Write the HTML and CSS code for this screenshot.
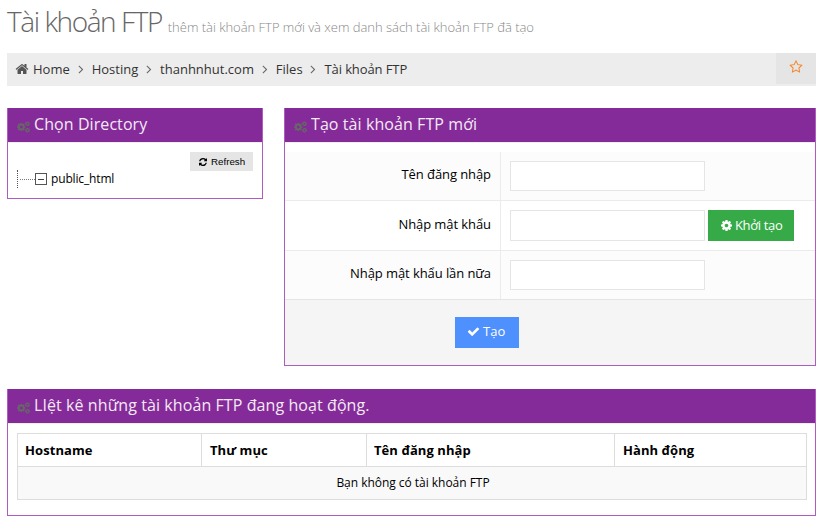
FILE: index.html
```html
<!DOCTYPE html>
<html lang="vi">
<head>
<meta charset="utf-8">
<title>Tài khoản FTP</title>
<link rel="stylesheet" href="styles.css">
</head>
<body>
<svg class="sprite" viewBox="0 0 0 0" aria-hidden="true">
  <symbol id="cog" viewBox="128 128 1536 1536"><path d="M1152 896q0-106-75-181t-181-75-181 75-75 181 75 181 181 75 181-75 75-181zm512-109v222q0 12-8 23t-20 13l-185 28q-19 54-39 91 35 50 107 138 10 12 10 25t-9 23q-27 37-99 108t-94 71q-12 0-26-9l-138-108q-44 23-91 38-16 136-29 186-7 28-36 28h-222q-14 0-24.500-8.500t-11.500-21.500l-28-184q-49-16-90-37l-141 107q-10 9-25 9-14 0-25-11-126-114-165-168-7-10-7-23 0-12 8-23 15-21 51-66.500t54-70.500q-27-50-41-99l-183-27q-13-2-21-12.500t-8-23.500v-222q0-12 8-23t19-13l186-28q14-46 39-92-40-57-107-138-10-12-10-24 0-10 9-23 26-36 98.500-107.500t94.500-71.500q13 0 26 10l138 107q44-23 91-38 16-136 29-186 7-28 36-28h222q14 0 24.500 8.500t11.500 21.500l28 184q49 16 90 37l142-107q9-9 24-9 13 0 25 10 129 119 165 170 7 8 7 22 0 12-8 23-15 21-51 66.500t-54 70.500q26 50 41 98l183 28q13 2 21 12.500t8 23.500z"/></symbol>
  <symbol id="cogs" viewBox="0 0 13 12"><use href="#cog" x="0" y="1.700" width="8.600" height="8.600"/><use href="#cog" x="8" y="0.200" width="5" height="5"/><use href="#cog" x="8" y="6.800" width="5" height="5"/></symbol>
  <symbol id="home" viewBox="0 0 1792 1792"><path d="M1472 992v480q0 26-19 45t-45 19h-384v-384h-256v384h-384q-26 0-45-19t-19-45v-480q0-1 .5-3t.5-3l575-474 575 474q1 2 1 6zm223-69l-62 74q-8 9-21 11h-3q-13 0-21-7l-692-577-692 577q-12 8-24 7-13-2-21-11l-62-74q-8-10-7-23.500t11-21.500l719-599q32-26 76-26t76 26l244 204v-195q0-14 9-23t23-9h192q14 0 23 9t9 23v408l219 182q10 8 11 21.500t-7 23.500z"/></symbol>
  <symbol id="angle" viewBox="0 0 1792 1792"><path d="M1171 960q0 13-10 23l-466 466q-10 10-23 10t-23-10l-50-50q-10-10-10-23t10-23l393-393-393-393q-10-10-10-23t10-23l50-50q10-10 23-10t23 10l466 466q10 10 10 23z"/></symbol>
  <symbol id="check" viewBox="0 0 1792 1792"><path d="M1671 566q0 40-28 68l-724 724-136 136q-28 28-68 28t-68-28l-136-136-362-362q-28-28-28-68t28-68l136-136q28-28 68-28t68 28l294 295 656-657q28-28 68-28t68 28l136 136q28 28 28 68z"/></symbol>
  <symbol id="star" viewBox="0 0 1792 1792"><path d="M1201 1004l306-297-422-62-189-382-189 382-422 62 306 297-73 421 378-199 377 199zm527-357q0 22-26 48l-363 354 86 500q1 7 1 20 0 50-41 50-19 0-40-12l-449-236-449 236q-22 12-40 12-21 0-31.500-14.500t-10.500-35.500q0-6 2-20l86-500-364-354q-25-27-25-48 0-37 56-46l502-73 225-455q19-41 49-41t49 41l225 455 502 73q56 9 56 46z"/></symbol>
  <symbol id="refresh" viewBox="128 128 1536 1536"><path d="M1639 1056q0 5-1 7-64 268-268 434.500t-478 166.500q-146 0-282.500-55t-243.500-157l-129 129q-19 19-45 19t-45-19-19-45v-448q0-26 19-45t45-19h448q26 0 45 19t19 45-19 45l-137 137q71 66 161 102t187 36q134 0 250-65t186-179q11-17 53-117 8-23 30-23h192q13 0 22.500 9.500t9.500 22.500zm25-800v448q0 26-19 45t-45 19h-448q-26 0-45-19t-19-45 19-45l138-138q-148-137-349-137-134 0-250 65t-186 179q-11 17-53 117-8 23-30 23h-199q-13 0-22.500-9.500t-9.500-22.500v-7q65-268 270-434.500t480-166.500q146 0 284 55.500t245 156.500l130-129q19-19 45-19t45 19 19 45z"/></symbol>
</svg>
<main class="page">
  <h1 class="title">Tài khoản FTP <small>thêm tài khoản FTP mới và xem danh sách tài khoản FTP đã tạo</small></h1>
  <nav class="crumbs">
    <svg class="home"><use href="#home"/></svg>
    <a>Home</a><svg class="sep"><use href="#angle"/></svg>
    <a>Hosting</a><svg class="sep"><use href="#angle"/></svg>
    <a>thanhnhut.com</a><svg class="sep"><use href="#angle"/></svg>
    <a>Files</a><svg class="sep"><use href="#angle"/></svg>
    <a>Tài khoản FTP</a>
    <span class="fav"><svg><use href="#star"/></svg></span>
  </nav>
  <div class="columns">
    <section class="box">
      <h2 class="head"><svg><use href="#cogs"/></svg><span>Chọn Directory</span></h2>
      <div class="dir">
        <button class="refresh"><svg><use href="#refresh"/></svg>Refresh</button>
        <div class="tree"><i class="branch"></i><i class="toggle"></i><span>public_html</span></div>
      </div>
    </section>
    <section class="box">
      <h2 class="head"><svg><use href="#cogs"/></svg><span>Tạo tài khoản FTP mới</span></h2>
      <form class="form">
        <div class="row odd first"><label>Tên đăng nhập</label><div class="field"><input type="text"></div></div>
        <div class="row mid"><label>Nhập mật khẩu</label><div class="field"><input type="text"><button type="button" class="btn green"><svg><use href="#cog"/></svg>Khởi tạo</button></div></div>
        <div class="row odd last"><label>Nhập mật khẩu lần nữa</label><div class="field"><input type="text"></div></div>
        <div class="actions"><button type="button" class="btn blue"><svg><use href="#check"/></svg>Tạo</button></div>
      </form>
    </section>
  </div>
  <section class="box list">
    <h2 class="head"><svg><use href="#cogs"/></svg><span>LIệt kê những tài khoản FTP đang hoạt động.</span></h2>
    <table class="table">
      <colgroup><col class="c1"><col class="c2"><col class="c3"><col class="c4"></colgroup>
      <thead><tr><th>Hostname</th><th>Thư mục</th><th>Tên đăng nhập</th><th>Hành động</th></tr></thead>
      <tbody><tr><td colspan="4">Bạn không có tài khoản FTP</td></tr></tbody>
    </table>
  </section>
</main>
</body>
</html>
```
FILE: styles.css
```css
* { box-sizing: border-box; }
body { margin: 0; background: #fff; color: #000; font: 13px/20px "Open Sans", sans-serif; overflow: hidden; }
svg { fill: currentColor; flex: none; display: block; }
.sprite { display: none; }
.page { padding: 0 5px 0 7px; }
.title { margin: 0; height: 53px; padding-top: 1px; font-size: 28px; line-height: 40px; font-weight: 300; letter-spacing: -1.42px; color: #666; white-space: nowrap; }
.title small { font-size: 13px; letter-spacing: -.02px; color: #888; }

.crumbs { display: flex; align-items: center; height: 33px; padding: 0 0 2px 8px; background: #ededed; color: #333; }
.crumbs .home { width: 14px; height: 14px; margin-right: 4px; color: #555; }
.crumbs .sep { width: 14px; height: 14px; margin: 0 4px 0 3.900px; color: #666; }
.crumbs a:last-of-type { letter-spacing: -.1px; }
.crumbs .fav { align-self: flex-start; display: flex; justify-content: center; width: 40px; height: 31px; margin-left: auto; padding-top: 7px; background: #e5e5e5; color: #f88529; }
.fav svg { width: 14px; height: 14px; }

.columns { display: grid; grid-template-columns: 256px 532px; column-gap: 21px; align-items: start; margin-top: 22px; }
.box { border: 1px solid #af5cc1; border-top: 0; background: #fff; }
.head { display: flex; height: 35px; margin: 0; padding: 6px 0 0 9px; background: #852b99; border-bottom: 1px solid #eee; color: #fff; font-size: 16px; line-height: 21px; font-weight: 400; letter-spacing: .08px; }
.head span { opacity: .9; }
.head svg { width: 13px; height: 12px; margin: 7px 4px 0 0; color: #666; }

.dir { height: 55px; padding: 9px 9px 0; }
.refresh { display: flex; align-items: center; gap: 4px; width: 63px; height: 19px; margin-left: auto; padding: 0 0 0 9px; border: 0; background: #e5e5e5; color: #000; font: 9.750px "Liberation Sans", sans-serif; }
.refresh svg { width: 8px; height: 8px; }
.tree { display: flex; align-items: center; height: 18px; font-size: 12px; letter-spacing: -.15px; margin-top: -1px; }
.branch { width: 18px; height: 18px; border-left: 1px dotted #555; background: repeating-linear-gradient(90deg, #777 0 1px, transparent 1px 2px) 2px 9px / 15px 1px no-repeat; }
.toggle { width: 12px; height: 12px; margin-right: 4px; border: 1px solid #555; background: linear-gradient(#444, #444) center / 6px 1px no-repeat; }

.form { padding-top: 9px; }
.row { display: grid; grid-template-columns: 216px 1fr; height: 49px; border-bottom: 1px solid #ebebeb; }
.row.mid { height: 50px; }
.row.odd { background: #fcfcfc; }
.row.last { height: 48px; border-bottom: 0; }
.row label { padding: 13px 9px 0 0; border-right: 1px solid #ebebeb; text-align: right; letter-spacing: -.08px; }
.row.first label { padding-top: 12px; }
.row.last label { padding-top: 12px; }
.field { display: flex; align-items: flex-start; gap: 3px; padding: 9px; }
.field input { width: 195px; height: 30px; margin: 0; padding: 0; border: 1px solid #e5e5e5; background: #fff; }
.mid input { height: 31px; }
.btn { display: flex; align-items: center; height: 31px; border: 0; padding: 0 0 1px 13px; color: #fff; font: 13px "Open Sans", sans-serif; white-space: nowrap; }
.btn svg { width: 11px; height: 11px; margin-right: 3px; }
.green { width: 86px; background: #35aa47; letter-spacing: -.35px; }
.blue { width: 64px; padding: 0 0 3px 12px; background: #4d90fe; }
.blue svg { width: 13px; height: 13px; }
.actions { height: 66px; padding: 17px 0 0 170px; border-top: 1px solid #e5e5e5; background: #f5f5f5; }

.list { height: 127px; margin-top: 23px; }
.table { width: 790px; margin: 9px 0 0 9px; border-collapse: collapse; table-layout: fixed; }
.table th, .table td { height: 33px; padding: 0 7px 1px; border: 1px solid #ddd; text-align: left; font-weight: 700; letter-spacing: .07px; }
.table th + th { padding-left: 8px; }
.table th:nth-child(3) { padding-left: 7px; }
.table td { padding: 0 6px 0 8px; background: #f9f9f9; text-align: center; font-weight: 400; font-size: 12px; letter-spacing: -.03px; }
.c1 { width: 184px; }
.c2 { width: 165px; }
.c3 { width: 248px; }
.c4 { width: 192px; }
```
